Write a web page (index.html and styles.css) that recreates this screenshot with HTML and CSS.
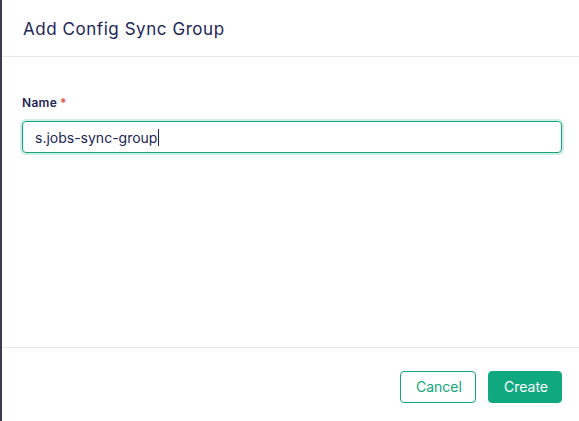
FILE: index.html
```html
<!DOCTYPE html>
<html>
<head>
<meta charset="utf-8">
<link rel="stylesheet" href="styles.css">
</head>
<body>
<div class="strip"></div>
<div class="modal">
  <div class="header"><h1 class="title">Add Config Sync Group</h1></div>
  <div class="content">
    <label class="label">Name<span class="req">*</span></label>
    <div class="input"><span class="value">s.jobs-sync-group</span><span class="caret"></span></div>
  </div>
  <div class="footer">
    <button class="btn btn-outline">Cancel</button>
    <button class="btn btn-primary">Create</button>
  </div>
</div>
</body>
</html>
```
FILE: styles.css
```css
html, body { margin: 0; padding: 0; }
body {
  width: 579px; height: 421px; overflow: hidden;
  display: flex; background: #fff;
  font-family: Inter, "Noto Sans", sans-serif;
}
.strip { width: 2px; background: #3c3c4c; flex: none; }
.modal { flex: 1; display: flex; flex-direction: column; background: #fff; }
.header {
  height: 57px; box-sizing: border-box; border-bottom: 1px solid #e6e6ee;
  display: flex; align-items: center; padding: 2px 20px 0 21px;
}
.title { margin: 0; font-size: 17px; font-weight: 400; color: #1c2556; letter-spacing: 0.55px; }
.content { flex: 1; padding: 38px 17px 0 20px; }
.label { display: block; font-size: 12px; font-weight: 600; color: #1c2556; line-height: 16px; letter-spacing: 0.3px; }
.req { color: #e0533d; margin-left: 3px; }
.input {
  margin-top: 10px; height: 32px; box-sizing: border-box;
  border: 1px solid #13a67e; border-radius: 4px;
  box-shadow: 0 0 0 2px #cdeee3;
  display: flex; align-items: center; padding-left: 12px;
  font-size: 14px; color: #1c2556;
}
.caret { width: 1px; height: 17px; background: #1c2556; margin-left: 1px; }
.footer {
  height: 74px; box-sizing: border-box; border-top: 1px solid #e6e6ee;
  display: flex; justify-content: flex-end; align-items: center; gap: 12px;
  padding: 4px 17px 0 0;
}
.btn {
  height: 32px; box-sizing: border-box; border-radius: 4px;
  font-family: Inter, "Noto Sans", sans-serif; font-size: 14px; padding: 0 15px;
  cursor: pointer;
}
.btn-outline { background: #fff; border: 1px solid #13a67e; color: #13a67e; width: 76px; }
.btn-primary { background: #0fa87f; border: 1px solid #0fa87f; color: #fff; width: 74px; }
```
